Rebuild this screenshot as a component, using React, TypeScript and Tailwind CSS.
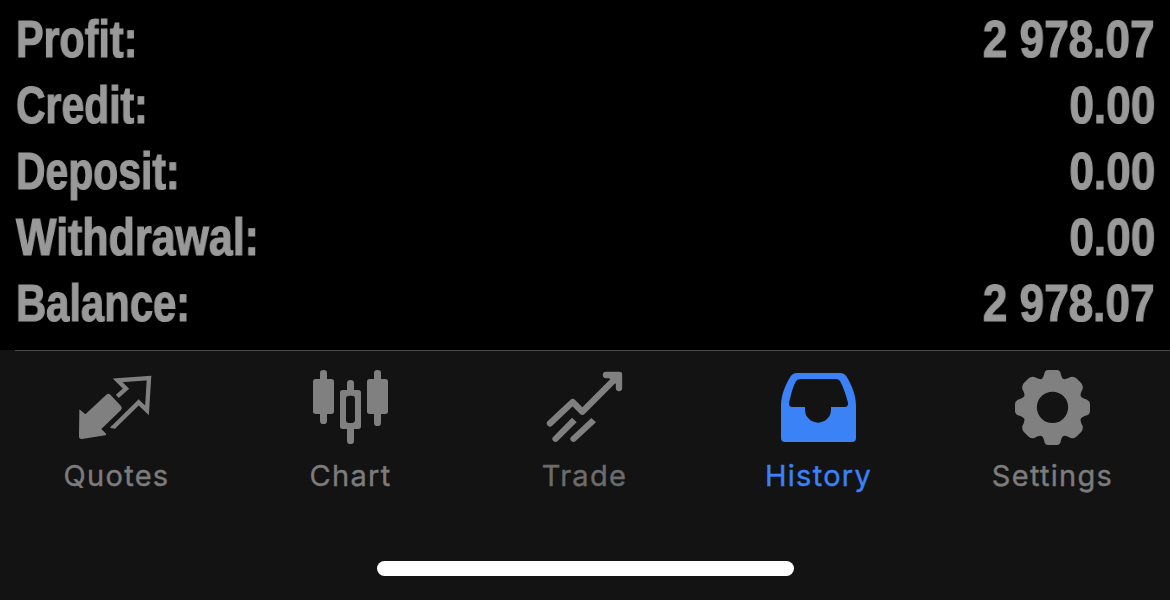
import type { ReactNode } from "react";

const rows = [
  { label: "Profit:", value: "2 978.07", fit: "scale-x-[0.808]" },
  { label: "Credit:", value: "0.00", fit: "scale-x-[0.802]" },
  { label: "Deposit:", value: "0.00", fit: "scale-x-[0.802]" },
  { label: "Withdrawal:", value: "0.00", fit: "scale-x-[0.842]" },
  { label: "Balance:", value: "2 978.07", fit: "scale-x-[0.819]" },
];

function Icon({ viewBox, children }: { viewBox: string; children: ReactNode }) {
  return (
    <svg viewBox={viewBox} className="h-[90px] w-[100px] shrink-0" fill="currentColor">
      {children}
    </svg>
  );
}

function QuotesIcon() {
  return (
    <Icon viewBox="51 15 300 270">
      <path d="M88 150 Q88 147 91 150 L106 163 L169 104 Q175 98 181 104 L213 138 Q218 144 213 150 L154 207 L168 221 Q170 225 166 226 L96 237 Q87 238 87 229 Z" />
      <path
        d="M202 109 L228 86 L203 61 L297 54 L291 151 L266 127 L191 201"
        fill="none"
        stroke="currentColor"
        strokeWidth="13"
      />
      <path d="M180 204 L186 195 L199 202 L195 206 Z" />
    </Icon>
  );
}

function ChartIcon() {
  return (
    <Icon viewBox="33 15 300 270">
      <rect x="90" y="30" width="21" height="162" rx="10" />
      <rect x="69" y="57" width="63" height="105" rx="8" />
      <rect x="252" y="30" width="21" height="168" rx="10" />
      <rect x="231" y="57" width="63" height="105" rx="8" />
      <rect x="171" y="60" width="21" height="40" rx="10" />
      <rect x="171" y="198" width="21" height="54" rx="10" />
      <path
        fillRule="evenodd"
        d="M158 90 H205 Q213 90 213 98 V199 Q213 207 205 207 H158 Q150 207 150 199 V98 Q150 90 158 90 Z M177 107 Q168 107 168 116 V180 Q168 189 177 189 H186 Q195 189 195 180 V116 Q195 107 186 107 Z"
      />
    </Icon>
  );
}

function TradeIcon() {
  return (
    <Icon viewBox="45 15 300 270">
      <g fill="none" stroke="currentColor" strokeWidth="19" strokeLinejoin="round">
        <path d="M90 190 L158 126 L187 155 L296 46" strokeLinecap="round" />
        <path d="M258 45 H297 V84" strokeLinecap="round" />
      </g>
      <path d="M264 50 H300 V80 L288 72 L270 56 Z" />
      <path d="M276 36 H300 Q306 36 306 42 V70 Z" />
      <path d="M156 173 L170 187 L113 243 A9 9 0 0 1 100 230 Z" />
      <path d="M214 174 L228 187 L167 243 A9 9 0 0 1 154 230 Z" />
    </Icon>
  );
}

function HistoryIcon() {
  return (
    <Icon viewBox="57 15 300 270">
      <path
        fillRule="evenodd"
        d="M139 39 H272 Q282 39 288 47 C306 75 318 107 318 137 V234 Q318 246 306 246 H105 Q93 246 93 234 V137 C93 107 105 75 123 47 Q129 39 139 39 Z M151 57 Q141 57 137 65 Q128 80 117 128 Q116 141 127 141 H165 V149 A39 39 0 0 0 243 149 V141 H284 Q295 141 294 128 Q284 91 272 67 Q267 57 257 57 Z"
      />
    </Icon>
  );
}

function SettingsIcon() {
  return (
    <Icon viewBox="69 15 300 270">
      <path
        fillRule="evenodd"
        d="M204 30 H231 Q238 30 241 37 Q245 56 251 57 Q257 59 272 51 Q282 49 289 55 L304 70 Q310 77 308 87 Q300 102 302 108 Q305 114 321 119 Q330 123 330 131 V154 Q330 162 321 166 Q305 171 302 177 Q300 183 308 198 Q310 208 304 215 L289 230 Q282 236 272 234 Q257 226 251 228 Q245 229 241 248 Q238 255 231 255 H204 Q197 255 194 248 Q190 229 184 228 Q178 226 163 234 Q153 236 146 230 L131 215 Q125 208 127 198 Q135 183 133 177 Q130 171 114 166 Q105 162 105 154 V131 Q105 123 114 119 Q130 114 133 108 Q135 102 127 87 Q125 77 131 70 L146 55 Q153 49 163 51 Q178 59 184 57 Q190 56 194 37 Q197 30 204 30 Z M217.5 95 A47 47 0 1 0 217.5 189 A47 47 0 1 0 217.5 95 Z"
      />
    </Icon>
  );
}

const tabs = [
  { name: "Quotes", icon: <QuotesIcon />, color: "text-[#808080]", label: "text-[#7c7c7c]" },
  { name: "Chart", icon: <ChartIcon />, color: "text-[#808080]", label: "text-[#7c7c7c]" },
  { name: "Trade", icon: <TradeIcon />, color: "text-[#808080]", label: "text-[#6c6c6c]" },
  { name: "History", icon: <HistoryIcon />, color: "text-[#3b82f7]", label: "text-[#3b82f7]" },
  { name: "Settings", icon: <SettingsIcon />, color: "text-[#808080]", label: "text-[#7c7c7c]" },
];

export default function App() {
  return (
    <div className="flex h-[600px] w-[1170px] flex-col overflow-hidden bg-black antialiased">
      <main className="flex h-[350px] flex-col pt-[7px] font-['Liberation_Sans',sans-serif] text-[51px] font-bold text-[#999999] [-webkit-text-stroke:1.2px_#999999]">
        {rows.map((row) => (
          <div key={row.label} className="flex h-[66px] shrink-0 items-center justify-between px-[15px] leading-[66px]">
            <span className={`ml-px origin-left will-change-transform ${row.fit}`}>{row.label}</span>
            <span className="origin-right scale-x-[0.865] will-change-transform">{row.value}</span>
          </div>
        ))}
      </main>
      <footer className="flex h-[250px] flex-col bg-[#131313]">
        <div className="ml-[15px] h-px shrink-0 bg-[#4c4c4c]" />
        <nav className="flex h-[210px] pt-[14px] font-['Inter',sans-serif]">
          {tabs.map((tab) => (
            <button key={tab.name} type="button" className={`flex w-[234px] flex-col items-center ${tab.color}`}>
              {tab.icon}
              <span className={`mt-[3px] mr-px text-[29px] leading-9 tracking-[1.3px] [-webkit-text-stroke:0.4px_currentColor] ${tab.label}`}>{tab.name}</span>
            </button>
          ))}
        </nav>
        <div className="mx-auto mb-6 ml-[377px] h-[15px] w-[417px] shrink-0 rounded-full bg-white" />
      </footer>
    </div>
  );
}
